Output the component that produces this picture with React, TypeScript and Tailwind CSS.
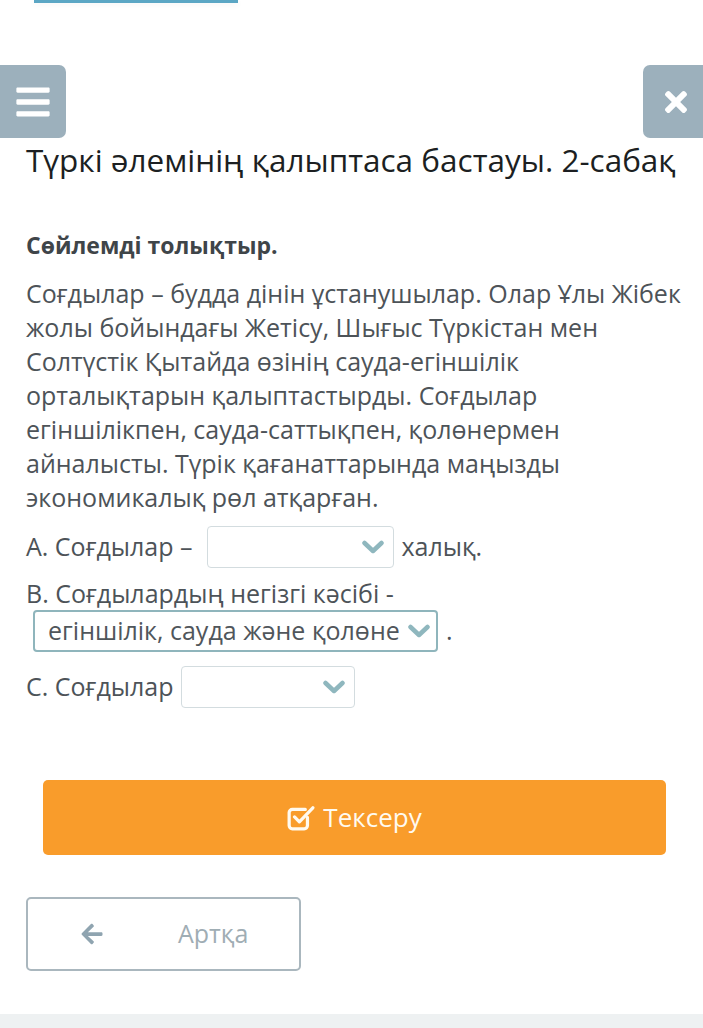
import React from "react";
import { FaBars, FaTimes, FaArrowLeft } from "react-icons/fa";

function Chevron() {
  return (
    <svg width="22" height="14" viewBox="0 0 22 14" className="shrink-0">
      <path d="M2.5 3L11 11L19.5 3" fill="none" stroke="#8fb7be" strokeWidth="4.5" strokeLinecap="round" strokeLinejoin="round" />
    </svg>
  );
}

function Select({ w, value, active }: { w: string; value?: string; active?: boolean }) {
  return (
    <div
      className={
        "inline-flex items-center justify-between h-[42px] rounded-[4px] bg-white shrink-0 " +
        w +
        (active ? " border-2 border-[#8fb5bc] pl-[13px] pr-[6px]" : " border border-[#d3dcdf] pl-[12px] pr-[9px]")
      }
    >
      <span className="text-[25px] text-[#50565b] whitespace-nowrap overflow-hidden">{value ?? ""}</span>
      <Chevron />
    </div>
  );
}

export default function App() {
  return (
    <div className="w-[703px] h-[1028px] bg-white relative overflow-hidden font-['Open_Sans',sans-serif]">
      <div className="ml-[34px] w-[204px] h-[3px] bg-[#5ba6c4] shadow-[0_2px_6px_rgba(0,0,0,0.06)]" />
      <div className="mt-[62px] flex justify-between h-[73px]">
        <div className="w-[66px] h-[73px] bg-[#9cb0bc] rounded-r-[7px] flex items-center justify-center">
          <FaBars className="text-white text-[38px]" />
        </div>
        <div className="w-[60px] h-[73px] bg-[#9cb0bc] rounded-l-[7px] flex items-center justify-center pl-[6px]">
          <FaTimes className="text-white text-[32px]" />
        </div>
      </div>
      <h1 className="px-[26px] mt-[2px] text-[31.5px] leading-[40px] text-[#1c1f22] whitespace-nowrap">
        Түркі әлемінің қалыптаса бастауы. 2-сабақ
      </h1>
      <div className="px-[26px] mt-[50px] text-[23px] leading-[30px] font-bold text-[#3f4549]">Сөйлемді толықтыр.</div>
      <p className="px-[26px] mt-[16px] text-[25px] leading-[34px] text-[#4d5358] pr-[14px]">
        Соғдылар – будда дінін ұстанушылар. Олар Ұлы Жібек жолы бойындағы Жетісу, Шығыс Түркістан мен Солтүстік Қытайда өзінің сауда-егіншілік орталықтарын қалыптастырды. Соғдылар егіншілікпен, сауда-саттықпен, қолөнермен айналысты. Түрік қағанаттарында маңызды экономикалық рөл атқарған.
      </p>
      <div className="px-[26px] mt-[12px] text-[25px] text-[#4d5358]">
        <div className="flex items-center h-[42px] whitespace-nowrap">
          <span>А. Соғдылар –</span>
          <span className="ml-[14px]" />
          <Select w="w-[187px]" />
          <span className="ml-[8px]">халық.</span>
        </div>
        <div className="mt-[10px] leading-[30px]">В. Соғдылардың негізгі кәсібі -</div>
        <div className="mt-[2px] flex items-center h-[42px] ml-[7px]">
          <Select w="w-[405px]" value="егіншілік, сауда және қолөне" active />
          <span className="ml-[8px]">.</span>
        </div>
        <div className="mt-[14px] flex items-center h-[42px] whitespace-nowrap">
          <span>С. Соғдылар</span>
          <span className="ml-[8px]" />
          <Select w="w-[174px]" />
        </div>
      </div>
      <div className="ml-[43px] w-[623px] mt-[72px] h-[75px] bg-[#f99c2b] rounded-[5px] flex items-center justify-center text-[#fffaf0] text-[26px]">
        <svg width="28" height="28" viewBox="0 0 26 26" className="mr-[8px]" fill="none" stroke="#fffaf0" strokeWidth="3" strokeLinecap="round" strokeLinejoin="round">
          <path d="M19 12.5v7.5a3 3 0 0 1-3 3H5a3 3 0 0 1-3-3V8a3 3 0 0 1 3-3h12" />
          <path d="M7 12l4.5 4.5L24 3.5" />
        </svg>
        <span>Тексеру</span>
      </div>
      <div className="ml-[26px] mt-[42px] w-[275px] h-[74px] border-2 border-[#aab7be] rounded-[5px] flex items-center">
        <FaArrowLeft className="ml-[52px] text-[#8fa4b0] text-[24px]" />
        <span className="ml-[74px] text-[25px] text-[#9fadb4]">Артқа</span>
      </div>
      <div className="absolute left-0 right-0 bottom-0 h-[14px] bg-[#eef1f2]" />
    </div>
  );
}
